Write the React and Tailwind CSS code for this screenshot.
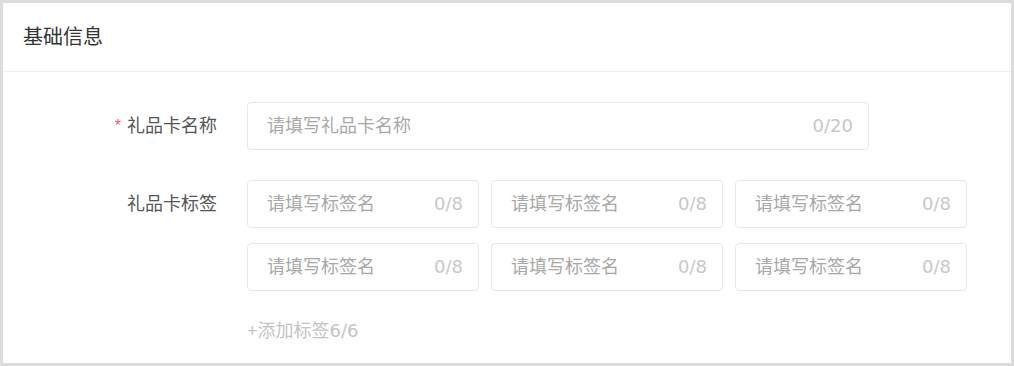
import React from 'react'

const font = { fontFamily: '"Liberation Sans", "Noto Sans CJK SC", sans-serif' }

function TagInput() {
  return (
    <div className="w-[232px] h-[48px] border border-[#e8e8e8] rounded-[4px] flex items-center justify-between pl-[19px] pr-[15px]">
      <span className="text-[#a8a8a8]">请填写标签名</span>
      <span className="text-[#c8c8c8] font-['DejaVu_Sans']">0/8</span>
    </div>
  )
}

export default function App() {
  return (
    <div className="w-[1014px] h-[366px] bg-[#dcdcdc] p-[3px]" style={font}>
      <div className="bg-white h-full">
        <div className="h-[69px] border-b border-[#efefef] flex items-center pl-[20px] text-[20px] text-[#333]">
          基础信息
        </div>

        <div className="pt-[30px] text-[18px] leading-[24px]">
          {/* name row */}
          <div className="flex items-center">
            <div className="w-[244px] pr-[30px] flex justify-end items-center text-[#555]">
              <span className="text-[#f5587b] text-[16px] mr-[6px]">*</span>
              礼品卡名称
            </div>
            <div className="w-[622px] h-[48px] border border-[#e8e8e8] rounded-[4px] flex items-center justify-between pl-[19px] pr-[15px]">
              <span className="text-[#a8a8a8]">请填写礼品卡名称</span>
              <span className="text-[#c8c8c8] font-['DejaVu_Sans']">0/20</span>
            </div>
          </div>

          {/* tag row */}
          <div className="flex mt-[30px]">
            <div className="w-[244px] pr-[30px] h-[48px] flex justify-end items-center text-[#555]">
              礼品卡标签
            </div>
            <div>
              <div className="grid grid-cols-[232px_232px_232px] gap-x-[12px] gap-y-[15px]">
                <TagInput />
                <TagInput />
                <TagInput />
                <TagInput />
                <TagInput />
                <TagInput />
              </div>
              <div className="mt-[28px] text-[#c4c4c4]">
                +添加标签<span className="font-['DejaVu_Sans']">6/6</span>
              </div>
            </div>
          </div>
        </div>
      </div>
    </div>
  )
}
